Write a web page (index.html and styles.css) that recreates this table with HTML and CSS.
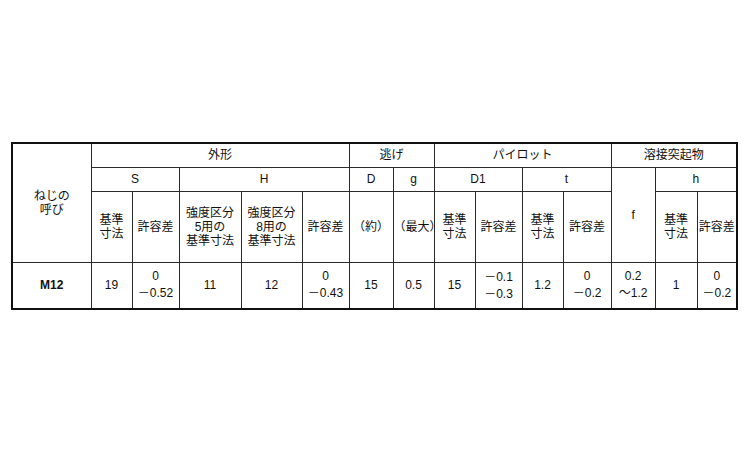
FILE: index.html
```html
<!DOCTYPE html>
<html lang="ja">
<head>
<meta charset="utf-8">
<title>M12 寸法表</title>
<link rel="stylesheet" href="styles.css">
</head>
<body>
<div class="page">
<table class="spec">
  <colgroup>
    <col class="c79"><col class="c41"><col class="c47"><col class="c62"><col class="c61">
    <col class="c47"><col class="c44"><col class="c41"><col class="c41"><col class="c47">
    <col class="c41"><col class="c48"><col class="c44"><col class="c42"><col class="c40">
  </colgroup>
  <tr class="r1">
    <td rowspan="3">ねじの<br>呼び</td>
    <td colspan="5">外形</td>
    <td colspan="2">逃げ</td>
    <td colspan="4">パイロット</td>
    <td colspan="3">溶接突起物</td>
  </tr>
  <tr class="r2">
    <td colspan="2">S</td>
    <td colspan="3">H</td>
    <td>D</td>
    <td>g</td>
    <td colspan="2">D1</td>
    <td colspan="2">t</td>
    <td rowspan="2">f</td>
    <td colspan="2">h</td>
  </tr>
  <tr class="r3">
    <td>基準<br>寸法</td>
    <td>許容差</td>
    <td>強度区分<br>5用の<br>基準寸法</td>
    <td>強度区分<br>8用の<br>基準寸法</td>
    <td>許容差</td>
    <td>（約）</td>
    <td>（最大）</td>
    <td>基準<br>寸法</td>
    <td>許容差</td>
    <td>基準<br>寸法</td>
    <td>許容差</td>
    <td>基準<br>寸法</td>
    <td>許容差</td>
  </tr>
  <tr class="r4">
    <td class="bold">M12</td>
    <td>19</td>
    <td>0<br><span class="mn">－</span>0.52</td>
    <td>11</td>
    <td>12</td>
    <td>0<br><span class="mn">－</span>0.43</td>
    <td>15</td>
    <td>0.5</td>
    <td>15</td>
    <td><span class="mn">－</span>0.1<br><span class="mn">－</span>0.3</td>
    <td>1.2</td>
    <td>0<br><span class="mn">－</span>0.2</td>
    <td>0.2<br><span class="mn">～</span>1.2</td>
    <td>1</td>
    <td>0<br><span class="mn">－</span>0.2</td>
  </tr>
</table>
</div>
</body>
</html>
```

FILE: styles.css
```css
html, body {
  margin: 0;
  padding: 0;
  background: #ffffff;
}

.page {
  padding: 142px 11px 0 11px;
}

.spec {
  border-collapse: collapse;
  table-layout: fixed;
  width: 725px;
  border: 2px solid #111;
  font-family: "Liberation Sans", "Noto Sans CJK JP", sans-serif;
  font-size: 12px;
  line-height: 14px;
  color: #111;
}

.spec td {
  border: 1px solid #2a2a2a;
  padding: 0;
  text-align: center;
  vertical-align: middle;
  white-space: nowrap;
}

.c79 { width: 79px; }
.c40 { width: 40px; }
.c41 { width: 41px; }
.c42 { width: 42px; }
.c44 { width: 44px; }
.c47 { width: 47px; }
.c48 { width: 48px; }
.c61 { width: 61px; }
.c62 { width: 62px; }

.r1 { height: 24px; }
.r2 { height: 24px; }
.r3 { height: 71px; }
.r4 { height: 47px; }

.r4 td { line-height: 15px; }

.bold { font-weight: bold; }

.mn {
  font-family: "Noto Sans CJK JP", sans-serif;
}
```
